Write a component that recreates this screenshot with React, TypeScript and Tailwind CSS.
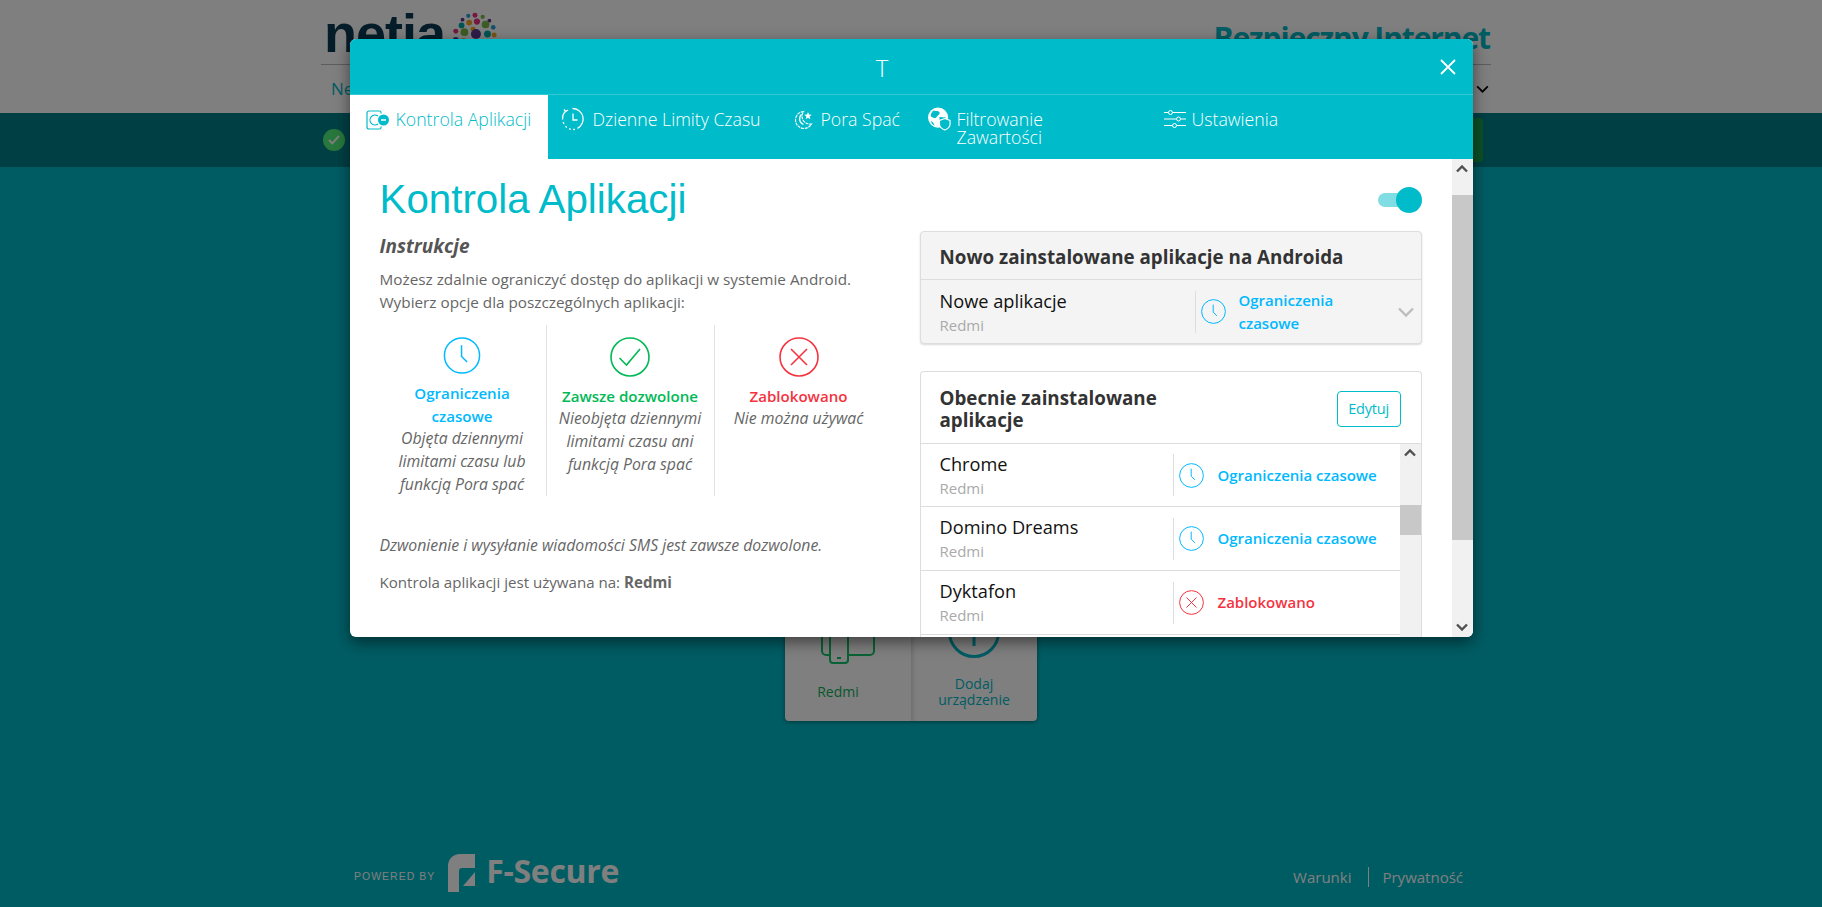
import React from 'react';

type Status = 'time' | 'allowed' | 'blocked';

const statusColor: Record<Status, string> = {
  time: 'text-[#00b9ff]',
  allowed: 'text-[#00b956]',
  blocked: 'text-[#f5333f]',
};

const StatusIcon = ({ kind, className }: { kind: Status; className: string }) => (
  <svg viewBox="0 0 40 40" fill="none" stroke="currentColor" strokeWidth="1.6" className={`${statusColor[kind]} ${className}`}>
    <circle cx="20" cy="20" r="19" />
    {kind === 'time' && <path d="M19.5 9v12l6 6" />}
    {kind === 'allowed' && <path d="M9.5 21l7 7L30 12" />}
    {kind === 'blocked' && <path d="M12 12l16 16M28 12L12 28" />}
  </svg>
);

const AppControlIcon = () => (
  <svg viewBox="0 0 24 20" fill="none" stroke="currentColor" strokeWidth="1.2" className="w-[24px] h-[20px] shrink-0">
    <path d="M15 3.5V2.5a1.5 1.5 0 0 0-1.5-1.5H3a2 2 0 0 0-2 2v14a2 2 0 0 0 2 2h10.5a1.5 1.5 0 0 0 1.5-1.5v-1" />
    <path d="M12 6a5 5 0 1 0 0 8" />
    <circle cx="17.5" cy="10" r="5.5" fill="currentColor" stroke="none" />
    <path d="M15 10h5" stroke="#fff" strokeWidth="1.6" />
  </svg>
);

const TimerIcon = () => (
  <svg viewBox="0 0 24 24" fill="none" stroke="currentColor" strokeWidth="1.3" className="w-[24px] h-[24px] shrink-0">
    <path d="M11.5 1.5a10.5 10.5 0 0 1 5 19.8" />
    <path d="M14 22.3l-1.8.2M9.8 22.3l-1.8-.6M5.8 20.4l-1.3-1.2M3 17l-.9-2" />
    <path d="M1.6 12.5A10.5 10.5 0 0 1 4.5 4.2" />
    <path d="M3 2.5l1.8 2L7 3" />
    <path d="M12 6.5V13h4.5" />
  </svg>
);

const MoonIcon = () => (
  <svg viewBox="0 0 20 20" fill="none" stroke="currentColor" strokeWidth="1.2" className="w-[20px] h-[20px] shrink-0">
    <path d="M9.5 1.5a8.5 8.5 0 1 0 8 12.5 8 8 0 0 1-8-12.5z" strokeDasharray="3 0.8" />
    <path d="M7.5 4.5a6 6 0 0 0 2 10" />
    <path d="M14 2l1 2.6 2.8.2-2.2 1.7.8 2.7-2.4-1.5-2.4 1.5.8-2.7-2.2-1.7 2.8-.2z" fill="currentColor" stroke="none" />
  </svg>
);

const GlobeIcon = () => (
  <svg viewBox="0 0 24 24" className="w-[23px] h-[24px] shrink-0">
    <circle cx="10.5" cy="10.5" r="10.5" fill="#fff" />
    <path d="M6 3c3 1 5 0 6 2s-2 3-3 5-3 1-5 0-1-5 2-7zM12 10c3 0 5 1 6 0l1 4-5 4-2-4zM3 14c2 1 3 2 4 5l-3-2z" fill="#00bbc9" />
    <path d="M17.5 11.5l5.5 2v4c0 3-3 5-5.5 6-2.5-1-5.5-3-5.5-6v-4z" fill="#00bbc9" stroke="#fff" strokeWidth="1.2" />
  </svg>
);

const SlidersIcon = () => (
  <svg viewBox="0 0 22 18" fill="none" stroke="currentColor" strokeWidth="1" className="w-[22px] h-[18px] shrink-0">
    <path d="M0 2.5h4.5M8.5 2.5H22M0 9h12.5M16.5 9H22M0 15.5h8.5M12.5 15.5H22" />
    <circle cx="6.5" cy="2.5" r="2" />
    <circle cx="14.5" cy="9" r="2" />
    <circle cx="10.5" cy="15.5" r="2" />
  </svg>
);

const Arrow = ({ down }: { down?: boolean }) => (
  <svg viewBox="0 0 12 8" fill="none" stroke="#505050" strokeWidth="2.4" className="w-[12px] h-[8px]">
    <path d={down ? 'M1 1.5l5 5 5-5' : 'M1 6.5l5-5 5 5'} />
  </svg>
);

const ballDots = [
  ['#5c3a92', 12, 8, 2], ['#2a9fd6', 18, 4, 2.2], ['#e8317b', 25, 3.5, 2.6], ['#7ab648', 33, 5, 2.2], ['#5c3a92', 40, 9, 2],
  ['#00a6a6', 11, 14, 3], ['#f5a623', 19, 11, 3], ['#e8317b', 27, 10, 3.2], ['#7ab648', 36, 13, 4], ['#2a9fd6', 44, 16, 2.4],
  ['#e8317b', 5, 20, 2.6], ['#7ab648', 14, 21, 4], ['#f5a623', 23, 18, 2.6], ['#5c3a92', 26, 23, 5.2], ['#00a6a6', 38, 23, 3.6], ['#f5a623', 45, 24, 2.6],
  ['#5c3a92', 5, 29, 3], ['#f5a623', 13, 30, 3], ['#2a9fd6', 21, 33, 5], ['#2a9fd6', 31, 32, 3], ['#e8317b', 39, 35, 5], ['#00a6a6', 46, 32, 2.4],
];

const Logo = () => (
  <div className="flex items-start">
    <span className="font-['Liberation_Sans',sans-serif] font-bold text-[54px] leading-[54px] text-[#0b3a52] tracking-[-1px] mt-[2px]">netia</span>
    <svg viewBox="0 0 50 50" className="w-[48px] h-[48px] ml-[6px] mt-[8px]">
      {ballDots.map(([color, x, y, r], index) => (
        <circle key={index} cx={x} cy={y} r={r} fill={color as string} />
      ))}
    </svg>
  </div>
);

const FSecureMark = () => (
  <svg viewBox="0 0 27 38" className="w-[27px] h-[38px]">
    <path d="M0 12C0 5 5 0 12 0h15v14H14c-2 0-3 1-3 3v21H0z" fill="#fff" />
    <path d="M15 32l12-14v14z" fill="#fff" />
  </svg>
);

const tabClass = 'flex items-start gap-[6px] pt-[15px] text-[17.7px] leading-[18px] font-light';

const explain = [
  {
    kind: 'time' as Status,
    title: <>Ograniczenia<br />czasowe</>,
    text: <>Objęta dziennymi<br />limitami czasu lub<br />funkcją Pora spać</>,
  },
  {
    kind: 'allowed' as Status,
    title: <>Zawsze dozwolone</>,
    text: <>Nieobjęta dziennymi<br />limitami czasu ani<br />funkcją Pora spać</>,
  },
  {
    kind: 'blocked' as Status,
    title: <>Zablokowano</>,
    text: <>Nie można używać</>,
  },
];

const apps: { name: string; kind: Status; label: string; height: string }[] = [
  { name: 'Chrome', kind: 'time', label: 'Ograniczenia czasowe', height: 'h-[63px]' },
  { name: 'Domino Dreams', kind: 'time', label: 'Ograniczenia czasowe', height: 'h-[64px]' },
  { name: 'Dyktafon', kind: 'blocked', label: 'Zablokowano', height: 'h-[64px]' },
];

const App = () => {
  return (
    <div className="relative h-screen overflow-hidden flex flex-col bg-[#00b8c6] font-['Open_Sans',sans-serif]">
      {/* Page behind the dialog */}
      <header className="h-[113px] bg-white shrink-0">
        <div className="w-[1170px] ml-[321px]">
          <div className="h-[65px] border-b border-[#bbbbbb] flex justify-between pt-[4px] pl-[3px] pr-px">
            <Logo />
            <span className="mt-[14px] text-[30px] leading-[40px] font-bold text-[#00b8c6] tracking-[-1.1px]">Bezpieczny Internet</span>
          </div>
          <div className="h-[48px] flex justify-between items-center pl-[10px] pr-[1px]">
            <span className="text-[17px] text-[#00b8c6]">Netia</span>
            <svg viewBox="0 0 14 9" fill="none" stroke="#000" strokeWidth="2" className="w-[13px] h-[8px] mr-px">
              <path d="M1 1.5l6 6 6-6" />
            </svg>
          </div>
        </div>
      </header>
      <div className="h-[54px] bg-[#008088] shrink-0">
        <div className="w-[1170px] ml-[321px] h-full flex items-center justify-between pl-[2px]">
          <span className="w-[22px] h-[22px] rounded-full bg-[#50ef78] flex items-center justify-center">
            <svg viewBox="0 0 14 12" fill="none" stroke="#fff" strokeWidth="2.2" className="w-[12px] h-[10px]">
              <path d="M1 6l4 4 8-9" />
            </svg>
          </span>
          <span className="h-[44px] w-[140px] rounded-[4px] bg-[#15a24a] -mr-[-8px]" />
        </div>
      </div>
      <main className="flex-1 flex justify-center pt-[425px]">
        <div className="flex h-[129px] rounded-[4px] bg-white shadow-[0_1px_4px_rgba(0,0,0,0.4)]">
          <div className="w-[126px] flex flex-col items-center">
            <svg viewBox="0 0 54 66" fill="none" stroke="#12c46b" strokeWidth="2" className="w-[54px] h-[66px] mt-[6px]">
              <rect x="1" y="1" width="52" height="56" rx="4" />
              <rect x="9" y="6" width="18" height="59" rx="3" fill="#fff" />
              <path d="M16 60h4" />
            </svg>
            <span className="mt-[17px] mr-[20px] text-[14px] text-[#0fae5e]">Redmi</span>
          </div>
          <div className="w-[126px] flex flex-col items-center shadow-[inset_4px_0_4px_-2px_rgba(0,0,0,0.15)]">
            <svg viewBox="0 0 52 52" fill="none" stroke="#00b8c6" strokeWidth="3" className="w-[52px] h-[52px] mt-[14px]">
              <circle cx="26" cy="26" r="24.5" />
              <path d="M26 12v28M12 26h28" />
            </svg>
            <span className="mt-[18px] text-[14px] leading-[16px] text-center text-[#00b8c6]">Dodaj<br />urządzenie</span>
          </div>
        </div>
      </main>
      <footer className="h-[64px] shrink-0">
        <div className="w-[1170px] ml-[321px] pl-[33px] pr-[28px] flex justify-between items-start text-white">
          <div className="flex items-center gap-[13px] pt-[11px]">
            <span className="text-[10.5px] tracking-[1px] mt-[8px] font-['Liberation_Sans',sans-serif]">POWERED BY</span>
            <div className="flex items-center gap-[11px]">
              <FSecureMark />
              <span className="text-[32px] leading-[30px] font-bold -mt-[5px] tracking-[-0.3px]">F-Secure</span>
            </div>
          </div>
          <div className="flex items-center pt-[24px] text-[15px] leading-[20px]">
            <span>Warunki</span>
            <span className="w-px h-[20px] bg-white ml-[17px] mr-[13px]" />
            <span>Prywatność</span>
          </div>
        </div>
      </footer>

      {/* Dialog with its overlay */}
      <div className="absolute inset-0 bg-black/50 pt-[39px]">
        <div className="w-[1123px] h-[598px] mx-auto rounded-[6px] bg-white overflow-hidden flex flex-col shadow-[0_5px_15px_rgba(0,0,0,0.5)]">
          <div className="bg-[#00bbc9] text-white shrink-0">
            <div className="relative h-[56px] border-b border-[#33c9d4] flex items-center justify-center pr-[58px] pt-[3px]">
              <span className="text-[24px] font-light leading-[30px]">T</span>
              <svg viewBox="0 0 16 16" fill="none" stroke="#fff" strokeWidth="1.8" className="absolute right-[17px] top-[20px] w-[16px] h-[16px]">
                <path d="M1 1l14 14M15 1L1 15" />
              </svg>
            </div>
            <div className="h-[64px] flex">
              <div className={`${tabClass} w-[198px] pl-[16px] bg-white text-[#00bbc9]`}>
                <AppControlIcon />
                <span>Kontrola Aplikacji</span>
              </div>
              <div className={`${tabClass} w-[232px] pl-[13px] !pt-[12px] !gap-[8px]`}>
                <TimerIcon />
                <span className="mt-[3px]">Dzienne Limity Czasu</span>
              </div>
              <div className={`${tabClass} w-[135px] pl-[14px]`}>
                <MoonIcon />
                <span className="ml-[1px]">Pora Spać</span>
              </div>
              <div className={`${tabClass} w-[236px] pl-[13px] !pt-[12px]`}>
                <GlobeIcon />
                <span className="mt-[3px]">Filtrowanie<br />Zawartości</span>
              </div>
              <div className={`${tabClass} pl-[13px]`}>
                <SlidersIcon />
                <span>Ustawienia</span>
              </div>
            </div>
          </div>

          <div className="flex-1 min-h-0 flex">
            <div className="flex-1 min-w-0 flex pl-[30px] pr-[31px] overflow-hidden">
              {/* Left column */}
              <div className="w-[540px] shrink-0 pt-[16px] text-[#666666]">
                <h1 className="font-['Liberation_Sans',sans-serif] text-[40.3px] leading-[50px] text-[#00bbc9]">Kontrola Aplikacji</h1>
                <h2 className="mt-[8px] text-[19px] leading-[26px] font-bold italic text-[#555555]">Instrukcje</h2>
                <p className="mt-[9px] text-[15.3px] leading-[23px]">
                  Możesz zdalnie ograniczyć dostęp do aplikacji w systemie Android.<br />
                  Wybierz opcje dla poszczególnych aplikacji:
                </p>
                <div className="mt-[11px] ml-[-1px] flex w-[504px]">
                  {explain.map((item, index) => (
                    <div key={index} className="w-[168px] h-[171px] pt-[12px] flex flex-col items-center text-center border-r border-[#e2e2e2] last:border-r-0 text-[15.8px] leading-[23px]">
                      <StatusIcon kind={item.kind} className="w-[40px] h-[40px] mb-[8px]" />
                      <div className={`font-semibold text-[15.1px] ${statusColor[item.kind]}`}>{item.title}</div>
                      <div className="italic -mt-[1px]">{item.text}</div>
                    </div>
                  ))}
                </div>
                <p className="mt-[38px] text-[15.8px] leading-[23px] italic">Dzwonienie i wysyłanie wiadomości SMS jest zawsze dozwolone.</p>
                <p className="mt-[14px] text-[15.1px] leading-[23px]">Kontrola aplikacji jest używana na: <b className="font-bold">Redmi</b></p>
              </div>

              {/* Right column */}
              <div className="w-[502px] shrink-0 pt-[28px]">
                <div className="flex justify-end">
                  <div className="relative w-[44px] h-[26px] flex items-center mb-[-1px]">
                    <span className="w-[32px] h-[14px] rounded-full bg-[#80dde4]" />
                    <span className="absolute right-0 top-0 w-[26px] h-[26px] rounded-full bg-[#00bbc9]" />
                  </div>
                </div>
                <div className="mt-[19px] h-[113px] rounded-[4px] border border-[#dddddd] bg-[#f4f4f4] shadow-[0_1px_2px_rgba(0,0,0,0.15)]">
                  <div className="h-[48px] border-b border-[#dddddd] pl-[19px] pt-[4px] flex items-center">
                    <h3 className="text-[18.8px] font-bold text-[#333333] whitespace-nowrap">Nowo zainstalowane aplikacje na Androida</h3>
                  </div>
                  <div className="h-[63px] flex items-center">
                    <div className="w-[274px] pl-[19px] pt-[2px]">
                      <div className="text-[18.2px] leading-[24px] text-[#111111]">Nowe aplikacje</div>
                      <div className="text-[15px] leading-[24px] text-[#aaaaaa]">Redmi</div>
                    </div>
                    <div className="flex-1 h-[42px] border-l border-[#dddddd] flex items-center pl-[5px]">
                      <StatusIcon kind="time" className="w-[25px] h-[25px]" />
                      <div className="ml-[13px] font-semibold text-[15px] leading-[23px] text-[#00b9ff]">Ograniczenia<br />czasowe</div>
                      <svg viewBox="0 0 16 10" fill="none" stroke="#bdbdbd" strokeWidth="2.4" className="w-[16px] h-[10px] ml-[65px]">
                        <path d="M1 1.5l7 7 7-7" />
                      </svg>
                    </div>
                  </div>
                </div>
                <div className="mt-[27px] rounded-t-[4px] border border-b-0 border-[#dddddd]">
                  <div className="h-[72px] border-b border-[#dddddd] pl-[19px] pr-[20px] pt-[2px] flex items-center justify-between">
                    <h3 className="text-[18.8px] leading-[22px] font-bold text-[#333333]">Obecnie zainstalowane<br />aplikacje</h3>
                    <button className="w-[64px] h-[36px] rounded-[4px] border border-[#00bbc9] text-[14.5px] text-[#00bbc9] tracking-[-0.2px]">Edytuj</button>
                  </div>
                  <div className="flex h-[194px]">
                    <div className="flex-1 min-w-0">
                      {apps.map((app) => (
                        <div key={app.name} className={`${app.height} border-b border-[#dddddd] flex items-center`}>
                          <div className="w-[252px] pl-[19px] pt-[1px]">
                            <div className="text-[18.2px] leading-[24px] text-[#111111]">{app.name}</div>
                            <div className="text-[15px] leading-[24px] text-[#aaaaaa]">Redmi</div>
                          </div>
                          <div className="flex-1 h-[42px] border-l border-[#dddddd] flex items-center pl-[5px]">
                            <StatusIcon kind={app.kind} className="w-[25px] h-[25px]" />
                            <span className={`ml-[14px] font-semibold text-[15px] ${statusColor[app.kind]}`}>{app.label}</span>
                          </div>
                        </div>
                      ))}
                    </div>
                    <div className="w-[21px] bg-[#f1f1f1] flex flex-col items-center pt-[5px]">
                      <Arrow />
                      <div className="w-full h-[30px] bg-[#c8c8c8] mt-[48px]" />
                    </div>
                  </div>
                </div>
              </div>
            </div>

            {/* Dialog scrollbar */}
            <div className="w-[21px] shrink-0 bg-[#f1f1f1] flex flex-col items-center">
              <div className="h-[36px] pt-[6px]"><Arrow /></div>
              <div className="w-full h-[345px] bg-[#c8c8c8]" />
              <div className="flex-1 flex items-end pb-[6px]"><Arrow down /></div>
            </div>
          </div>
        </div>
      </div>
    </div>
  );
};

export default App;
